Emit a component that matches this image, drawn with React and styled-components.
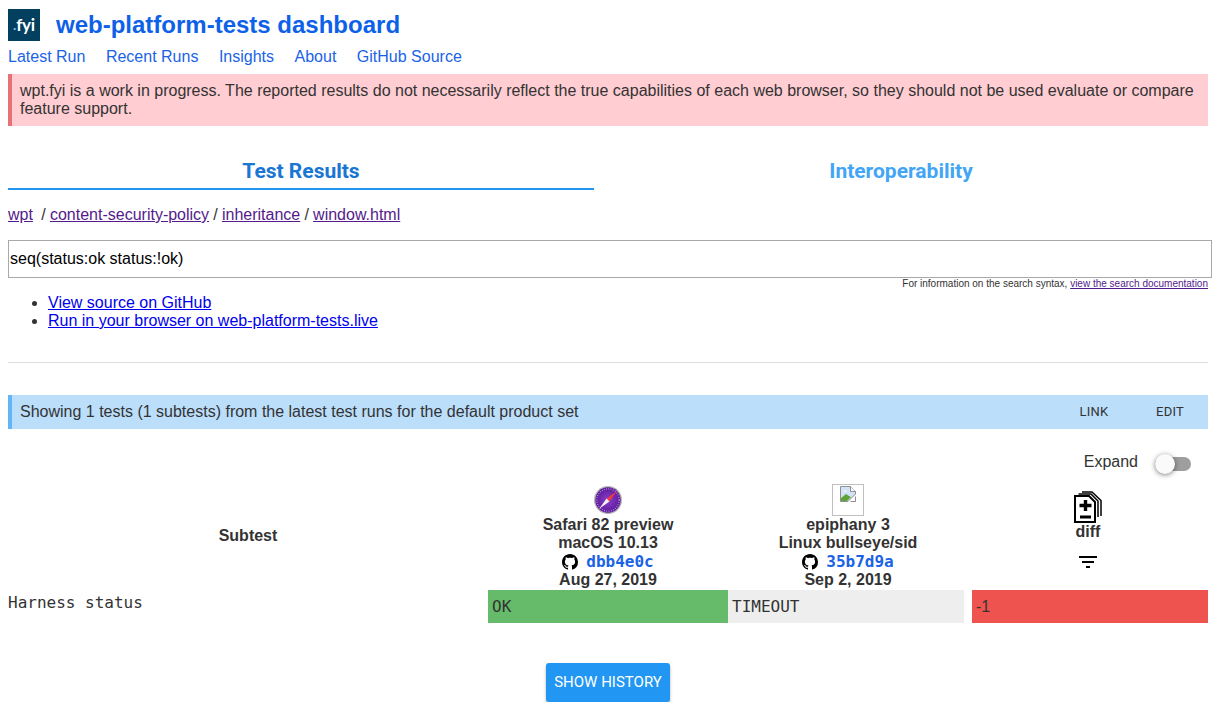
import React from "react";
import styled, { createGlobalStyle } from "styled-components";

const Global = createGlobalStyle`
  html, body { margin: 0; padding: 0; background: #fff; }
  body { margin: 8px; font-family: "Liberation Sans", Arial, sans-serif; font-size: 16px; line-height: 18px; color: #333; }
`;
const Page = styled.div`width: 1200px; display: flex; flex-direction: column;`;
const Header = styled.header`display: flex; align-items: center; gap: 16px; height: 32px; margin-top: 1px;`;
const Logo = styled.div`width: 32px; height: 32px; background: #03405f; color: #fff; display: flex; align-items: center; justify-content: center; font: 700 17px/32px "Lato", sans-serif; letter-spacing: -.2px;`;
const LogoDot = styled.span`color: #8fb9d0; font-size: 14px;`;
const Title = styled.h1`margin: 0; font-size: 24px; line-height: 32px; font-weight: 700; color: #0d61e8;`;
const Nav = styled.nav`display: flex; gap: 20.5px; height: 18px; margin-top: 7px;`;
const NavLink = styled.a`color: #1a63e6; text-decoration: none;`;
const Banner = styled.div`margin-top: 8px; background: #ffcdd2; border-left: 4px solid #e57373; padding: 8px; height: 52px; box-sizing: border-box; color: #333;`;
const Tabs = styled.div`display: grid; grid-template-columns: 586px 1fr; margin-top: 24px;`;
const Tab = styled.div`
  height: 40px; box-sizing: border-box; text-align: center; font: 700 21px/42px Roboto, sans-serif;
  color: ${p => p.$active ? "#1976d2" : "#42a5f5"};
  border-bottom: 2px solid ${p => p.$active ? "#2196f3" : "transparent"};
`;
const Crumbs = styled.div`margin-top: 16px; height: 18px; white-space: pre; word-spacing: -.25px;`;
const Visited = styled.a`color: #551a8b; text-decoration: underline;`;
const SearchBox = styled.div`
  margin-top: 16px; width: 1204px; height: 38px; box-sizing: border-box; border: 1px solid #a9a9a9;
  padding: 0 1px; font-size: 16px; line-height: 35px; color: #000;
`;
const Hint = styled.div`text-align: right; font-size: 10px; line-height: 12px;`;
const HintLink = styled(Visited)``;
const List = styled.ul`margin: 4px 0 0; padding: 0 0 0 40px;`;
const Item = styled.li``;
const SrcLink = styled.a`color: #0000ee; text-decoration: underline;`;
const Rule = styled.hr`margin: 32px 0 0; border: 0; border-top: 1px solid #ddd; height: 0;`;
const Info = styled.div`
  margin-top: 32px; height: 34px; background: #bbdefb; border-left: 4px solid #64b5f6; box-sizing: border-box;
  padding-left: 8px; display: flex; align-items: center; justify-content: space-between; color: #333;
`;
const InfoActions = styled.div`display: flex;`;
const InfoBtn = styled.span`width: 76px; text-align: center; font: 400 13px/18px Roboto, sans-serif; letter-spacing: .2px; color: #333;`;
const ExpandRow = styled.div`display: flex; justify-content: flex-end; align-items: center; margin-top: 24px; height: 18px; padding-right: 17px; gap: 17px;`;
const Track = styled.div`position: relative; width: 36px; height: 14px; border-radius: 7px; background: #9e9e9e; margin-top: 4px;`;
const Knob = styled.div`position: absolute; left: 0; top: -3px; width: 20px; height: 20px; border-radius: 50%; background: #fafafa; box-shadow: 0 1px 5px rgba(0,0,0,.5);`;
const Grid = styled.div`display: grid; grid-template-columns: 480px 240px 240px 240px; margin-top: 13px;`;
const HeadCell = styled.div`display: flex; flex-direction: column; align-items: center; font-weight: 700; height: 106px; text-align: center;`;
const SubtestHead = styled(HeadCell)`justify-content: center; padding-bottom: 2px; box-sizing: border-box;`;
const Line = styled.div`height: 18px; line-height: 18px; white-space: nowrap;`;
const IconSlot = styled.div`height: 32px; display: flex; align-items: center; justify-content: center;`;
const DiffSlot = styled.div`height: 39px; display: flex; align-items: flex-end; justify-content: center;`;
const ShaLine = styled.div`height: 19px; display: flex; align-items: center; justify-content: center; gap: 8px;`;
const Sha = styled.a`font: 700 16px/19px "DejaVu Sans Mono", monospace; color: #1a63e6; text-decoration: none;`;
const Broken = styled.div`width: 32px; height: 32px; box-sizing: border-box; border: 1px solid #c0c0c0; padding: 1px;`;
const FilterSlot = styled.div`margin-top: 9px; height: 24px; display: flex; align-items: center; justify-content: center;`;
const NameCell = styled.div`font: 16px/26px "DejaVu Sans Mono", monospace; height: 33px;`;
const Result = styled.div`
  height: 33px; box-sizing: border-box; padding: 0 4px; font: 16px/33px "DejaVu Sans Mono", monospace; color: #333;
  background: ${p => p.$bg}; margin-right: ${p => p.$mr || 0}px; margin-left: ${p => p.$ml || 0}px;
`;
const DiffResult = styled(Result)`font-family: "Liberation Sans", sans-serif;`;
const Center = styled.div`display: flex; justify-content: center; margin-top: 40px;`;
const Button = styled.button`
  width: 124px; height: 39px; border: 0; border-radius: 3px; background: #2196f3; color: #fff; padding: 0;
  font: 400 15px/39px Roboto, sans-serif; box-shadow: 0 2px 3px rgba(0,0,0,.3);
`;

const Github = () => (
  <svg width="16" height="16" viewBox="0 0 16 16" fill="#000"><path d="M8 0C3.58 0 0 3.58 0 8c0 3.54 2.29 6.53 5.47 7.59.4.07.55-.17.55-.38 0-.19-.01-.82-.01-1.49-2.01.37-2.53-.49-2.69-.94-.09-.23-.48-.94-.82-1.13-.28-.15-.68-.52-.01-.53.63-.01 1.08.58 1.23.82.72 1.21 1.87.87 2.33.66.07-.52.28-.87.51-1.07-1.78-.2-3.64-.89-3.64-3.95 0-.87.31-1.59.82-2.15-.08-.2-.36-1.02.08-2.12 0 0 .67-.21 2.2.82.64-.18 1.32-.27 2-.27s1.36.09 2 .27c1.53-1.04 2.2-.82 2.2-.82.44 1.1.16 1.92.08 2.12.51.56.82 1.27.82 2.15 0 3.07-1.87 3.75-3.65 3.95.29.25.54.73.54 1.48 0 1.07-.01 1.93-.01 2.2 0 .21.15.46.55.38A8.01 8.01 0 0 0 16 8c0-4.42-3.58-8-8-8z"/></svg>
);
const SafariIcon = () => (
  <svg width="28" height="28" viewBox="0 0 28 28">
    <defs>
      <radialGradient id="saf" cx="50%" cy="50%" r="50%">
        <stop offset="0%" stopColor="#8b3fc9" />
        <stop offset="100%" stopColor="#5c1a9a" />
      </radialGradient>
    </defs>
    <circle cx="14" cy="14" r="14" fill="#b4b4b4"/>
    <circle cx="14" cy="14" r="12.7" fill="url(#saf)"/>
    <circle cx="14" cy="14" r="11.2" fill="none" stroke="#c9a6e6" strokeWidth="1.4" strokeDasharray="0.7 1.6"/>
    <polygon points="23,5 12.6,12.6 15.4,15.4" fill="#ef3b3b"/>
    <polygon points="5,23 12.6,12.6 15.4,15.4" fill="#f2f2f2"/>
  </svg>
);
const BrokenIcon = () => (
  <svg width="16" height="16" viewBox="0 0 16 16">
    <path d="M.5.5h10l5 5v2.5L8 15.5H.5z" fill="#d3e2f7" stroke="#8f8f8f"/>
    <path d="M10.5.5v5h5" fill="#fff" stroke="#8f8f8f"/>
    <path d="M1 15V12l5-4 3 2 2 1-4 4z" fill="#5fa336"/>
    <path d="M3 5.5c1-1.5 3-1.5 4 0z" fill="#fff"/>
    <path d="M15.5 10.5v5h-5" fill="none" stroke="#8f8f8f"/>
  </svg>
);
const DiffIcon = () => (
  <svg width="28" height="32" viewBox="0 0 28 32" fill="none" stroke="#000">
    <path d="M1 5h14l6 6v20H1z" fill="#fff" strokeWidth="2"/>
    <path d="M4.5 3H17l7 7v16" strokeWidth="1.5"/>
    <path d="M8 1h10l9 8.5V25" strokeWidth="1.5"/>
    <path d="M11.5 9v11M5.5 14.5h12" strokeWidth="3.4"/>
    <path d="M6 26h11" strokeWidth="3"/>
  </svg>
);
const FilterIcon = () => (
  <svg width="24" height="24" viewBox="0 0 24 24" fill="#000"><path d="M10 18h4v-2h-4v2zM3 6v2h18V6H3zm3 7h12v-2H6v2z"/></svg>
);

export default function App() {
  return (
    <Page>
      <Global />
      <Header>
        <Logo><LogoDot>.</LogoDot>fyi</Logo>
        <Title>web-platform-tests dashboard</Title>
      </Header>
      <Nav>
        <NavLink>Latest Run</NavLink>
        <NavLink>Recent Runs</NavLink>
        <NavLink>Insights</NavLink>
        <NavLink>About</NavLink>
        <NavLink>GitHub Source</NavLink>
      </Nav>
      <Banner>wpt.fyi is a work in progress. The reported results do not necessarily reflect the true capabilities of each web browser, so they should not be used evaluate or compare feature support.</Banner>
      <Tabs>
        <Tab $active>Test Results</Tab>
        <Tab>Interoperability</Tab>
      </Tabs>
      <Crumbs><Visited>wpt</Visited>  / <Visited>content-security-policy</Visited> / <Visited>inheritance</Visited> / <Visited>window.html</Visited></Crumbs>
      <SearchBox>seq(status:ok status:!ok)</SearchBox>
      <Hint>For information on the search syntax, <HintLink>view the search documentation</HintLink></Hint>
      <List>
        <Item><SrcLink>View source on GitHub</SrcLink></Item>
        <Item><SrcLink>Run in your browser on web-platform-tests.live</SrcLink></Item>
      </List>
      <Rule />
      <Info>
        <span>Showing 1 tests (1 subtests) from the latest test runs for the default product set</span>
        <InfoActions><InfoBtn>LINK</InfoBtn><InfoBtn>EDIT</InfoBtn></InfoActions>
      </Info>
      <ExpandRow>
        <span>Expand</span>
        <Track><Knob /></Track>
      </ExpandRow>
      <Grid>
        <SubtestHead>Subtest</SubtestHead>
        <HeadCell>
          <IconSlot><SafariIcon /></IconSlot>
          <Line>Safari 82 preview</Line>
          <Line>macOS 10.13</Line>
          <ShaLine><Github /><Sha>dbb4e0c</Sha></ShaLine>
          <Line>Aug 27, 2019</Line>
        </HeadCell>
        <HeadCell>
          <IconSlot><Broken><BrokenIcon /></Broken></IconSlot>
          <Line>epiphany 3</Line>
          <Line>Linux bullseye/sid</Line>
          <ShaLine><Github /><Sha>35b7d9a</Sha></ShaLine>
          <Line>Sep 2, 2019</Line>
        </HeadCell>
        <HeadCell>
          <DiffSlot><DiffIcon /></DiffSlot>
          <Line>diff</Line>
          <FilterSlot><FilterIcon /></FilterSlot>
        </HeadCell>
        <NameCell>Harness status</NameCell>
        <Result $bg="#66bb6a">OK</Result>
        <Result $bg="#eeeeee" $mr={4}>TIMEOUT</Result>
        <DiffResult $bg="#ef5350" $ml={4}>-1</DiffResult>
      </Grid>
      <Center><Button>SHOW HISTORY</Button></Center>
    </Page>
  );
}
